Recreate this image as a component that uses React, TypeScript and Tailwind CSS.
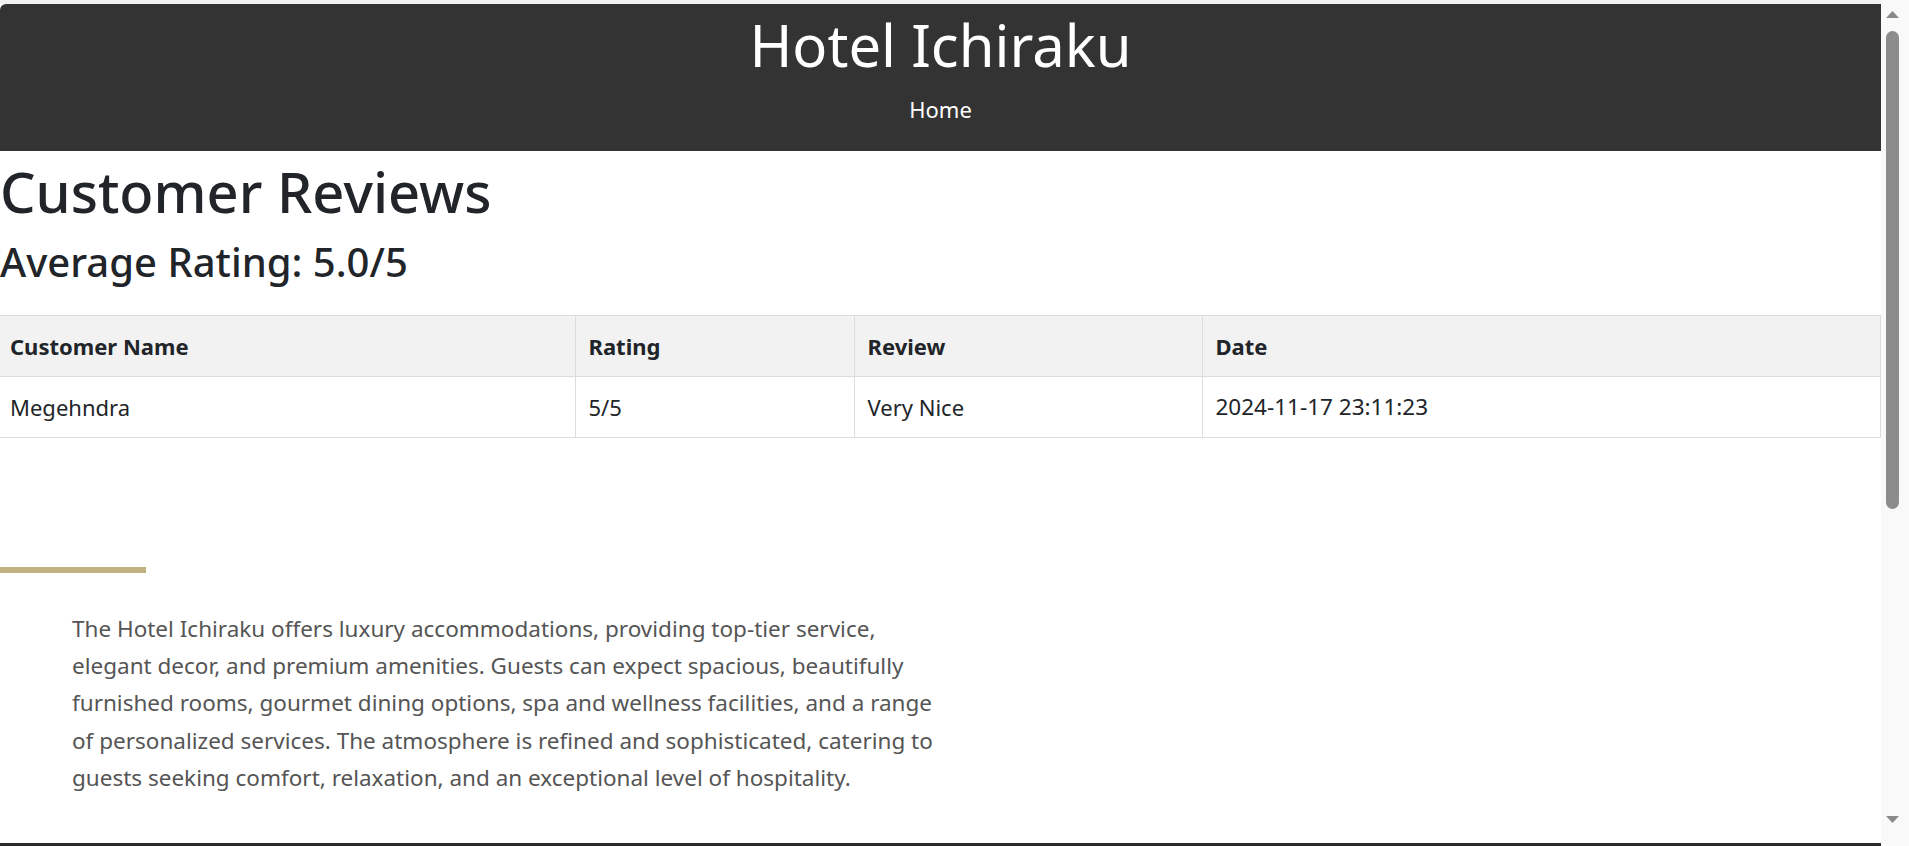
const reviews = [
  { name: 'Megehndra', rating: '5/5', review: 'Very Nice', date: '2024-11-17 23:11:23' },
];

const font = { fontFamily: '"Noto Sans", "Open Sans", sans-serif' };

function Scrollbar() {
  return (
    <div className="w-[28px] h-[846px] shrink-0 bg-[#f9f9f9] flex flex-col items-center pt-[10px] pb-[22px] pr-[5px]">
      <svg width="15" height="9" viewBox="0 0 15 9" className="shrink-0">
        <path d="M7.5 1 L14 8 L1 8 Z" fill="#8a8a8a" />
      </svg>
      <div className="mt-[12px] w-[13px] h-[478px] rounded-full bg-[#8c8c8c]" />
      <div className="flex-1" />
      <svg width="15" height="9" viewBox="0 0 15 9" className="shrink-0">
        <path d="M1 1 L14 1 L7.5 8 Z" fill="#8a8a8a" />
      </svg>
    </div>
  );
}

export default function App() {
  return (
    <div className="flex w-[1909px] h-[846px] overflow-hidden bg-white" style={font}>
      <div className="flex-1 flex flex-col h-[846px] overflow-hidden">
        <div className="h-[4px] shrink-0 bg-[#f1f1f1]" />
        <div className="flex-1 overflow-hidden">
          <header className="bg-[#333333] text-white text-center h-[147px] rounded-tl-[6px] pt-[7px]">
            <h1 className="text-[58px] leading-[68px] font-normal">Hotel Ichiraku</h1>
            <nav className="mt-[14px] text-[22px] leading-[32px]">
              <a className="text-white">Home</a>
            </nav>
          </header>

          <main className="text-[#212529]">
            <h1 className="mt-[5px] text-[56px] leading-[70px] font-medium">Customer Reviews</h1>
            <h2 className="mt-[12px] text-[40px] leading-[48px] font-medium">Average Rating: 5.0/5</h2>

            <table className="mt-[29px] w-full border-collapse text-[22px] leading-[36px] table-fixed">
              <colgroup>
                <col className="w-[575px]" />
                <col className="w-[279px]" />
                <col className="w-[348px]" />
                <col />
              </colgroup>
              <thead>
                <tr className="bg-[#f2f2f2]">
                  <th className="border-y border-r border-[#dddddd] py-[12px] pl-[10px] text-left font-bold">Customer Name</th>
                  <th className="border border-[#dddddd] py-[12px] px-[13px] text-left font-bold">Rating</th>
                  <th className="border border-[#dddddd] py-[12px] px-[13px] text-left font-bold">Review</th>
                  <th className="border border-[#dddddd] py-[12px] px-[13px] text-left font-bold">Date</th>
                </tr>
              </thead>
              <tbody>
                {reviews.map((r) => (
                  <tr key={r.date}>
                    <td className="border-y border-r border-[#dddddd] py-[12px] pl-[10px]">{r.name}</td>
                    <td className="border border-[#dddddd] py-[12px] px-[13px]">{r.rating}</td>
                    <td className="border border-[#dddddd] py-[12px] px-[13px]">{r.review}</td>
                    <td className="border border-[#dddddd] py-[12px] px-[13px] text-[22.5px]">{r.date}</td>
                  </tr>
                ))}
              </tbody>
            </table>

            <section className="mt-[129px]">
              <div className="w-[146px] h-[6px] bg-[#c2b283]" />
              <p className="mt-[37px] ml-[72px] w-[866px] text-[22.5px] leading-[37.2px] text-[#555555]">
                The Hotel Ichiraku offers luxury accommodations, providing top-tier service, elegant decor, and premium
                amenities. Guests can expect spacious, beautifully furnished rooms, gourmet dining options, spa and
                wellness facilities, and a range of personalized services. The atmosphere is refined and sophisticated,
                catering to guests seeking comfort, relaxation, and an exceptional level of hospitality.
              </p>
            </section>
          </main>
        </div>
        <div className="h-[3px] shrink-0 bg-[#2b2b2b]" />
      </div>
      <Scrollbar />
    </div>
  );
}
